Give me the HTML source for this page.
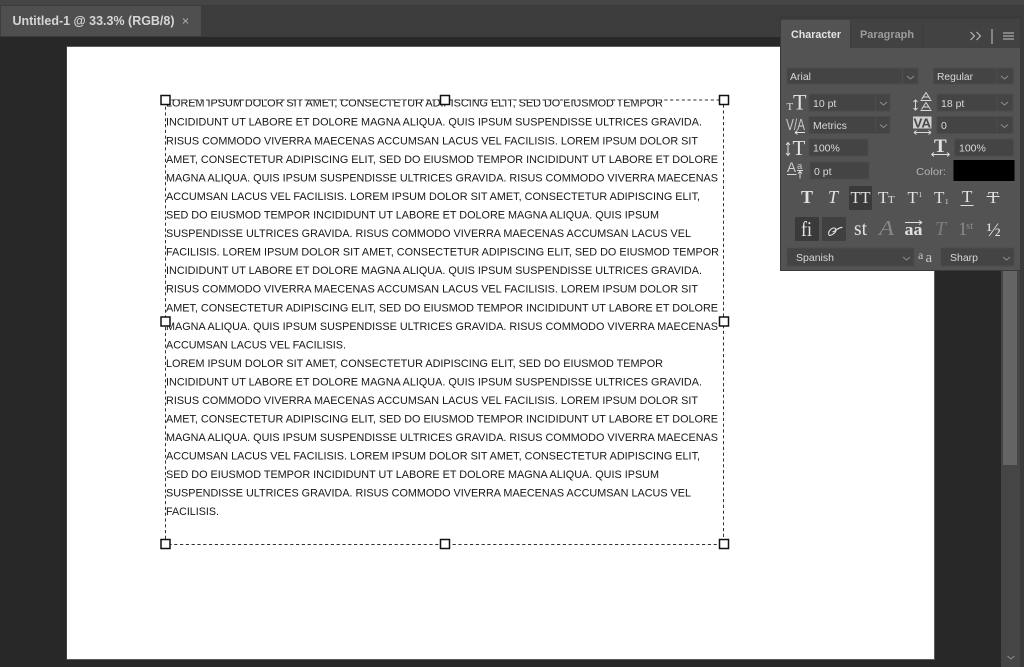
<!DOCTYPE html>
<html><head><meta charset="utf-8"><style>
html,body{margin:0;padding:0;width:1024px;height:667px;overflow:hidden;background:#282828}
svg{display:block}
.ui{font-family:"Liberation Sans",sans-serif;font-size:10.5px;fill:#d8d8d8}
.doc{font-family:"Liberation Sans",sans-serif;font-size:11px;fill:#161616}
.s{font-family:"Liberation Serif",serif;fill:#e2e2e2}
.f{fill:#444;stroke:#4b4b4b;stroke-width:1}
.ch{fill:none;stroke:#8e8e8e;stroke-width:1}
.sep{stroke:#4c4c4c;stroke-width:1}
</style></head><body>
<svg width="1024" height="667" viewBox="0 0 1024 667" xmlns="http://www.w3.org/2000/svg">
<!-- top chrome -->
<rect width="1024" height="5" fill="#454545"/>
<rect y="5" width="1024" height="32" fill="#3c3c3c"/>
<rect y="37" width="1024" height="630" fill="#282828"/>
<rect x="1" y="6" width="200" height="30" fill="#4f4f4f"/>
<text x="12.500" y="25" style="font-family:'Liberation Sans',sans-serif;font-size:13px;font-weight:bold;fill:#d6d6d6" textLength="162" lengthAdjust="spacingAndGlyphs">Untitled-1 @ 33.3% (RGB/8)</text>
<path d="M183 18.500l5 5M188 18.500l-5 5" stroke="#a8a8a8" stroke-width="1" fill="none"/>
<!-- document -->
<rect x="66.500" y="46" width="868.500" height="614" fill="#5c5c5c"/>
<rect x="67" y="47" width="867" height="612" fill="#fff"/>
<!-- scrollbar -->
<rect x="1001" y="37" width="19" height="630" fill="#454545"/>
<rect x="1020" y="37" width="4" height="630" fill="#3a3a3a"/>
<rect x="1003" y="270" width="14" height="195" fill="#646464"/>
<path d="M1007.500 656l3.500 3 3.500-3" fill="none" stroke="#8c8c8c"/>
<!-- text -->
<g class="doc" transform="translate(0,-0.5)">
<text x="166" y="107" textLength="497" lengthAdjust="spacingAndGlyphs">LOREM IPSUM DOLOR SIT AMET, CONSECTETUR ADIPISCING ELIT, SED DO EIUSMOD TEMPOR</text>
<text x="166" y="126" textLength="536" lengthAdjust="spacingAndGlyphs">INCIDIDUNT UT LABORE ET DOLORE MAGNA ALIQUA. QUIS IPSUM SUSPENDISSE ULTRICES GRAVIDA.</text>
<text x="166" y="145" textLength="532" lengthAdjust="spacingAndGlyphs">RISUS COMMODO VIVERRA MAECENAS ACCUMSAN LACUS VEL FACILISIS. LOREM IPSUM DOLOR SIT</text>
<text x="166" y="163.500" textLength="552" lengthAdjust="spacingAndGlyphs">AMET, CONSECTETUR ADIPISCING ELIT, SED DO EIUSMOD TEMPOR INCIDIDUNT UT LABORE ET DOLORE</text>
<text x="166" y="182" textLength="552" lengthAdjust="spacingAndGlyphs">MAGNA ALIQUA. QUIS IPSUM SUSPENDISSE ULTRICES GRAVIDA. RISUS COMMODO VIVERRA MAECENAS</text>
<text x="166" y="200.500" textLength="534" lengthAdjust="spacingAndGlyphs">ACCUMSAN LACUS VEL FACILISIS. LOREM IPSUM DOLOR SIT AMET, CONSECTETUR ADIPISCING ELIT,</text>
<text x="166" y="219" textLength="493" lengthAdjust="spacingAndGlyphs">SED DO EIUSMOD TEMPOR INCIDIDUNT UT LABORE ET DOLORE MAGNA ALIQUA. QUIS IPSUM</text>
<text x="166" y="237.500" textLength="525" lengthAdjust="spacingAndGlyphs">SUSPENDISSE ULTRICES GRAVIDA. RISUS COMMODO VIVERRA MAECENAS ACCUMSAN LACUS VEL</text>
<text x="166" y="256" textLength="553" lengthAdjust="spacingAndGlyphs">FACILISIS. LOREM IPSUM DOLOR SIT AMET, CONSECTETUR ADIPISCING ELIT, SED DO EIUSMOD TEMPOR</text>
<text x="166" y="274.500" textLength="536" lengthAdjust="spacingAndGlyphs">INCIDIDUNT UT LABORE ET DOLORE MAGNA ALIQUA. QUIS IPSUM SUSPENDISSE ULTRICES GRAVIDA.</text>
<text x="166" y="293" textLength="532" lengthAdjust="spacingAndGlyphs">RISUS COMMODO VIVERRA MAECENAS ACCUMSAN LACUS VEL FACILISIS. LOREM IPSUM DOLOR SIT</text>
<text x="166" y="312" textLength="552" lengthAdjust="spacingAndGlyphs">AMET, CONSECTETUR ADIPISCING ELIT, SED DO EIUSMOD TEMPOR INCIDIDUNT UT LABORE ET DOLORE</text>
<text x="166" y="330.500" textLength="552" lengthAdjust="spacingAndGlyphs">MAGNA ALIQUA. QUIS IPSUM SUSPENDISSE ULTRICES GRAVIDA. RISUS COMMODO VIVERRA MAECENAS</text>
<text x="166" y="349" textLength="180" lengthAdjust="spacingAndGlyphs">ACCUMSAN LACUS VEL FACILISIS.</text>
<text x="166" y="367.500" textLength="497" lengthAdjust="spacingAndGlyphs">LOREM IPSUM DOLOR SIT AMET, CONSECTETUR ADIPISCING ELIT, SED DO EIUSMOD TEMPOR</text>
<text x="166" y="386" textLength="536" lengthAdjust="spacingAndGlyphs">INCIDIDUNT UT LABORE ET DOLORE MAGNA ALIQUA. QUIS IPSUM SUSPENDISSE ULTRICES GRAVIDA.</text>
<text x="166" y="404.500" textLength="532" lengthAdjust="spacingAndGlyphs">RISUS COMMODO VIVERRA MAECENAS ACCUMSAN LACUS VEL FACILISIS. LOREM IPSUM DOLOR SIT</text>
<text x="166" y="423" textLength="552" lengthAdjust="spacingAndGlyphs">AMET, CONSECTETUR ADIPISCING ELIT, SED DO EIUSMOD TEMPOR INCIDIDUNT UT LABORE ET DOLORE</text>
<text x="166" y="441.500" textLength="552" lengthAdjust="spacingAndGlyphs">MAGNA ALIQUA. QUIS IPSUM SUSPENDISSE ULTRICES GRAVIDA. RISUS COMMODO VIVERRA MAECENAS</text>
<text x="166" y="460" textLength="534" lengthAdjust="spacingAndGlyphs">ACCUMSAN LACUS VEL FACILISIS. LOREM IPSUM DOLOR SIT AMET, CONSECTETUR ADIPISCING ELIT,</text>
<text x="166" y="478.500" textLength="493" lengthAdjust="spacingAndGlyphs">SED DO EIUSMOD TEMPOR INCIDIDUNT UT LABORE ET DOLORE MAGNA ALIQUA. QUIS IPSUM</text>
<text x="166" y="497" textLength="525" lengthAdjust="spacingAndGlyphs">SUSPENDISSE ULTRICES GRAVIDA. RISUS COMMODO VIVERRA MAECENAS ACCUMSAN LACUS VEL</text>
<text x="166" y="515.500" textLength="53" lengthAdjust="spacingAndGlyphs">FACILISIS.</text>
</g>
<rect x="160" y="90" width="570" height="9.500" fill="#fff"/>
<!-- bounding box -->
<g fill="none" stroke="#333" stroke-width="1" stroke-dasharray="3.200 2.600">
<path d="M165.500 100H723.500V544.500H165.500Z"/>
</g>
<g fill="#fff" stroke="#111" stroke-width="1.500">
<rect x="161" y="95.500" width="9" height="9"/><rect x="440.500" y="95.500" width="9" height="9"/><rect x="719.500" y="95.500" width="9" height="9"/>
<rect x="161" y="317" width="9" height="9"/><rect x="719.500" y="317" width="9" height="9"/>
<rect x="161" y="539.500" width="9" height="9"/><rect x="440.500" y="539.500" width="9" height="9"/><rect x="719.500" y="539.500" width="9" height="9"/>
</g>
<!-- panel -->
<rect x="780" y="16" width="241" height="255" fill="#3a3a3a"/>
<rect x="781" y="19" width="239" height="251" fill="#535353"/>
<rect x="781" y="19" width="239" height="29" fill="#424242"/>
<rect x="781" y="20" width="69" height="29" fill="#535353"/>
<path d="M850.500 20V48M922.500 20V48" stroke="#3c3c3c"/>
<text x="791" y="38" style="font-family:'Liberation Sans',sans-serif;font-size:11px;font-weight:bold;fill:#e4e4e4" textLength="50" lengthAdjust="spacingAndGlyphs">Character</text>
<text x="860" y="38" style="font-family:'Liberation Sans',sans-serif;font-size:11px;font-weight:bold;fill:#9c9c9c" textLength="54" lengthAdjust="spacingAndGlyphs">Paragraph</text>
<path d="M970.500 32l4 4-4 4M976.500 32l4 4-4 4" fill="none" stroke="#c4c4c4"/>
<path d="M992 29V44" stroke="#c4c4c4"/>
<path d="M1003 33h11M1003 36h11M1003 39h11" stroke="#c4c4c4" fill="none"/>
<!-- font row -->
<rect class="f" x="787" y="68" width="131" height="16"/><path class="sep" d="M902.500 68V84"/><path class="ch" d="M907 76l3.500 3 3.500-3"/>
<text class="ui" x="790" y="80" textLength="21" lengthAdjust="spacingAndGlyphs">Arial</text>
<rect class="f" x="933.500" y="68" width="80" height="16"/><path class="sep" d="M997 68V84"/><path class="ch" d="M1001 76l3.500 3 3.500-3"/>
<text class="ui" x="937" y="80" textLength="36" lengthAdjust="spacingAndGlyphs">Regular</text>
<!-- row 2 -->
<rect class="f" x="809" y="94" width="81" height="17"/><path class="sep" d="M875.500 94V111"/><path class="ch" d="M880 102l3.500 3 3.500-3"/>
<text class="ui" x="813" y="107">10 pt</text>
<rect class="f" x="937" y="94" width="76" height="17"/><path class="sep" d="M997 94V111"/><path class="ch" d="M1001 102l3.500 3 3.500-3"/>
<text class="ui" x="941" y="107">18 pt</text>
<text class="s" x="786.500" y="110" style="font-size:11px">T</text><text class="s" x="793" y="109.500" style="font-size:22px">T</text>
<g fill="none" stroke="#d8d8d8">
<path d="M915.500 100v10M913.500 102l2-2 2 2M913.500 108l2 2 2-2"/>
<path d="M921.500 99.500l4.500-7 4.500 7M923 97h6M921.500 109.500l4.500-7 4.500 7M923 107h6"/>
<path d="M920.500 100.500h11M920.500 110.500h11"/>
</g>
<!-- row 3 -->
<rect class="f" x="809" y="116.500" width="81" height="17"/><path class="sep" d="M875.500 116.500V133.500"/><path class="ch" d="M880 124.500l3.500 3 3.500-3"/>
<text class="ui" x="813" y="129">Metrics</text>
<rect class="f" x="937" y="116.500" width="76" height="17"/><path class="sep" d="M997 116.500V133.500"/><path class="ch" d="M1001 124.500l3.500 3 3.500-3"/>
<text class="ui" x="941" y="129">0</text>
<text x="786" y="130" style="font-family:'Liberation Sans',sans-serif;font-size:15.500px;fill:#c8c8c8" textLength="19" lengthAdjust="spacingAndGlyphs">V/A</text>
<path d="M795 132.500h10M795 132.500l2.500-2M795 132.500l2.500 2" stroke="#e0e0e0" fill="none"/>
<rect x="913" y="116.500" width="18.500" height="12" fill="#d0d0d0"/>
<text x="913.500" y="127.500" style="font-family:'Liberation Sans',sans-serif;font-size:13px;font-weight:bold;fill:#484848" textLength="17.500" lengthAdjust="spacingAndGlyphs">VA</text>
<path d="M914 132.500h17M914 132.500l2.500-2M914 132.500l2.500 2M931 132.500l-2.500-2M931 132.500l-2.500 2" stroke="#d8d8d8" fill="none"/>
<!-- row 4 -->
<rect class="f" x="809" y="139" width="59" height="17"/>
<text class="ui" x="813" y="151.500">100%</text>
<rect class="f" x="954.500" y="139" width="59" height="17"/>
<text class="ui" x="959" y="151.500">100%</text>
<path d="M788 142.500v13M786 145l2-2.500 2 2.500M786 153l2 2.500 2-2.500" stroke="#e0e0e0" fill="none"/>
<text class="s" x="792.500" y="155" style="font-size:21px">T</text>
<text class="s" x="934" y="152" style="font-size:19px;font-weight:bold">T</text>
<path d="M931.500 154.500h18M931.500 154.500l2.500-2M931.500 154.500l2.500 2M949.500 154.500l-2.500-2M949.500 154.500l-2.500 2" stroke="#e0e0e0" fill="none"/>
<!-- row 5 -->
<rect class="f" x="810" y="162" width="59" height="17"/>
<text class="ui" x="814" y="175">0 pt</text>
<text x="787" y="172" style="font-family:'Liberation Sans',sans-serif;font-size:13.500px;fill:#d0d0d0">A</text>
<text x="797" y="169" style="font-family:'Liberation Sans',sans-serif;font-size:9.500px;fill:#d0d0d0">a</text>
<path d="M787 174.500h9.500M797 170.500h6M800 171v7.500M798 173.500l2-2 2 2" stroke="#d8d8d8" fill="none"/>
<text class="ui" x="916" y="175" style="fill:#b4b4b4" textLength="30" lengthAdjust="spacingAndGlyphs">Color:</text>
<rect x="953.500" y="160" width="61" height="21" fill="#000"/>
<!-- style buttons -->
<rect x="849" y="186" width="23" height="24" rx="1" fill="#3a3a3a"/>
<text class="s" x="801" y="203" style="font-size:18px;font-weight:bold">T</text>
<text class="s" x="828" y="203" style="font-size:18px;font-style:italic">T</text>
<text class="s" x="850.500" y="203" style="font-size:17px" textLength="20" lengthAdjust="spacingAndGlyphs">TT</text>
<text class="s" x="878" y="203" style="font-size:17px">T</text><text class="s" x="888" y="203" style="font-size:11px">T</text>
<text class="s" x="907.500" y="203" style="font-size:17px">T</text><text class="s" x="918.500" y="197" style="font-size:7px">1</text>
<text class="s" x="934" y="203" style="font-size:17px">T</text><text class="s" x="945" y="204" style="font-size:7px">1</text>
<text class="s" x="962" y="202" style="font-size:17px">T</text><path d="M960.500 205.500h13" stroke="#e0e0e0"/>
<text class="s" x="988" y="203" style="font-size:17px">T</text><path d="M986.500 196.500h13" stroke="#e0e0e0"/>
<!-- opentype buttons -->
<rect x="795" y="217" width="24" height="24" rx="1" fill="#3a3a3a"/>
<rect x="822" y="217" width="24" height="24" rx="1" fill="#404040"/>
<text class="s" x="801" y="236" style="font-size:21px" textLength="11" lengthAdjust="spacingAndGlyphs">fi</text>
<path d="M829 235c-1.500-3 2-7 5-7 2.500 0 2.500 3 .5 5-2 2-5.500 3-5.500 2M832.500 232c3-1 6.500-5 10-4.500" fill="none" stroke="#e4e4e4" stroke-width="1.100"/>
<text class="s" x="854" y="235" style="font-size:20px" textLength="13" lengthAdjust="spacingAndGlyphs">st</text>
<text class="s" x="879" y="235" style="font-size:21px;font-style:italic;fill:#878787" textLength="15" lengthAdjust="spacingAndGlyphs">A</text>
<text class="s" x="904.500" y="235" style="font-size:17px;font-weight:bold" textLength="18" lengthAdjust="spacingAndGlyphs">aa</text>
<path d="M905 222.500h17M922 222.500l-3-2M922 222.500l-3 2" stroke="#e0e0e0" fill="none"/>
<text class="s" x="935" y="235" style="font-size:20px;font-style:italic;fill:#7c7c7c">T</text>
<text class="s" x="958" y="235" style="font-size:19px;fill:#8a8a8a">1</text><text class="s" x="966" y="229" style="font-size:11px;fill:#8a8a8a">st</text>
<text class="s" x="986.500" y="236" style="font-size:19px">½</text>
<!-- bottom row -->
<rect class="f" x="787" y="248" width="127" height="18"/><path class="ch" d="M903 257l3.500 3 3.500-3"/>
<text class="ui" x="796" y="261" textLength="38" lengthAdjust="spacingAndGlyphs">Spanish</text>
<text class="s" x="918" y="259" style="font-size:12px;fill:#c8c8c8">a</text><text class="s" x="925.500" y="262" style="font-size:15px;fill:#c8c8c8">a</text>
<rect class="f" x="941" y="248" width="73" height="18"/><path class="ch" d="M1003 257l3.500 3 3.500-3"/>
<text class="ui" x="950" y="261" textLength="28" lengthAdjust="spacingAndGlyphs">Sharp</text>
</svg>
</body></html>
